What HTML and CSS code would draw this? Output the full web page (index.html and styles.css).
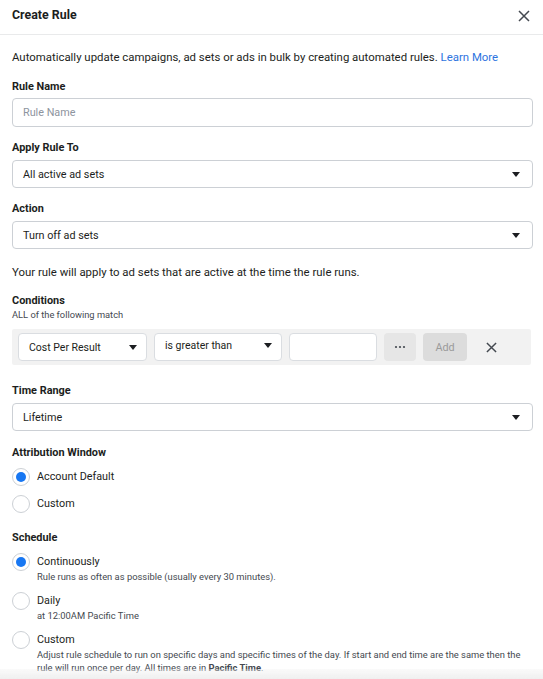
FILE: index.html
```html
<!DOCTYPE html>
<html>
<head>
<meta charset="utf-8">
<link rel="stylesheet" href="styles.css">
</head>
<body>
<div class="header">
  <div class="title">Create Rule</div>
  <svg class="close" width="12" height="12" viewBox="0 0 12 12"><path d="M1 1L11 11M11 1L1 11" stroke="#444950" stroke-width="1.5" fill="none"/></svg>
</div>
<div class="content">
  <p class="desc">Automatically update campaigns, ad sets or ads in bulk by creating automated rules. <a class="link">Learn More</a></p>

  <div class="label first">Rule Name</div>
  <div class="field input"><span class="placeholder">Rule Name</span></div>

  <div class="label">Apply Rule To</div>
  <div class="field select"><span>All active ad sets</span><span class="caret"></span></div>

  <div class="label">Action</div>
  <div class="field select"><span>Turn off ad sets</span><span class="caret"></span></div>

  <p class="note">Your rule will apply to ad sets that are active at the time the rule runs.</p>

  <div class="label">Conditions</div>
  <div class="sublabel">ALL of the following match</div>
  <div class="cond">
    <div class="cfield csel1"><span>Cost Per Result</span><span class="caret"></span></div>
    <div class="cfield csel2"><span>is greater than</span><span class="caret"></span></div>
    <div class="cfield cinput"></div>
    <div class="btn more"><svg width="12" height="4" viewBox="0 0 12 4"><circle cx="2" cy="2" r="1.1" fill="#444950"/><circle cx="6" cy="2" r="1.1" fill="#444950"/><circle cx="10" cy="2" r="1.1" fill="#444950"/></svg></div>
    <div class="btn add">Add</div>
    <svg class="cx" width="11" height="11" viewBox="0 0 12 12"><path d="M1 1L11 11M11 1L1 11" stroke="#444950" stroke-width="1.6" fill="none"/></svg>
  </div>

  <div class="label tr">Time Range</div>
  <div class="field select"><span>Lifetime</span><span class="caret"></span></div>

  <div class="label attr">Attribution Window</div>
  <div class="radios">
    <div class="radio-row"><span class="radio on"></span><div class="rtext"><div class="rtitle">Account Default</div></div></div>
    <div class="radio-row"><span class="radio"></span><div class="rtext"><div class="rtitle">Custom</div></div></div>
  </div>

  <div class="label sched">Schedule</div>
  <div class="radios">
    <div class="radio-row"><span class="radio on"></span><div class="rtext"><div class="rtitle">Continuously</div><div class="rsub">Rule runs as often as possible (usually every 30 minutes).</div></div></div>
    <div class="radio-row"><span class="radio"></span><div class="rtext"><div class="rtitle">Daily</div><div class="rsub">at 12:00AM Pacific Time</div></div></div>
    <div class="radio-row"><span class="radio"></span><div class="rtext"><div class="rtitle">Custom</div><div class="rsub">Adjust rule schedule to run on specific days and specific times of the day. If start and end time are the same then the rule will run once per day. All times are in <b>Pacific Time</b>.</div></div></div>
  </div>
</div>
<div class="fade"></div>
</body>
</html>
```

FILE: styles.css
```css
* { box-sizing: border-box; }
html, body { margin: 0; padding: 0; background: #fff; }
body {
  font-family: Roboto, "Liberation Sans", Arial, sans-serif;
  font-size: 11.4px;
  color: #1c1e21;
  width: 543px;
  height: 679px;
  overflow: hidden;
}
.header {
  height: 35px;
  border-bottom: 1px solid #e9eaeb;
  display: flex;
  align-items: center;
  justify-content: space-between;
  padding: 0 13px 5px 12px;
}
.title { font-weight: 700; font-size: 12.4px; color: #1c1e21; }
.close { margin-top: 2px; }
.content { padding: 0 10px 0 12px; }
.desc { margin: 14px 0 0; line-height: 16px; font-size: 11.4px; color: #1c1e21; }
.link { color: #2d74e0; }
.label {
  font-weight: 700;
  font-size: 10.9px;
  line-height: 16px;
  margin-top: 13px;
  color: #1c1e21;
}
.label.first { margin-top: 14px; }
.field {
  margin-top: 4px;
  height: 28px;
  border: 1px solid #ccd0d5;
  border-radius: 4px;
  display: flex;
  align-items: center;
  padding: 0 10px;
  font-size: 10.8px;
}
.field.input { height: 29px; margin-top: 3px; }
.placeholder { color: #8d949e; }
.select { justify-content: space-between; padding-right: 12px; }
.caret {
  width: 0; height: 0;
  border-left: 4px solid transparent;
  border-right: 4px solid transparent;
  border-top: 5px solid #1c1e21;
}
.note { margin: 15px 0 0; line-height: 16px; }
.sublabel { font-size: 9.3px; line-height: 12px; color: #444950; }
.cond {
  margin-top: 8px;
  background: #f2f2f2;
  border-radius: 2px;
  height: 36px;
  width: 519px;
  display: flex;
  align-items: center;
  padding: 0 6px;
  gap: 7px;
}
.cfield {
  height: 28px;
  background: #fff;
  border: 1px solid #dadde1;
  border-radius: 4px;
  display: flex;
  align-items: center;
  justify-content: space-between;
  padding: 0 9px 0 10px;
  font-size: 10.5px;
}
.csel1 { width: 129px; }
.csel2 { width: 128px; padding-bottom: 3px; }
.cinput { width: 88px; }
.btn {
  height: 28px;
  border-radius: 4px;
  display: flex;
  align-items: center;
  justify-content: center;
}
.more { width: 32px; background: #e6e6e6; }
.add { width: 44px; background: #dcdcdc; color: #9a9a9a; font-size: 10.8px; }
.cx { margin-left: 12px; }
.label.tr { margin-top: 18px; }
.label.attr { margin-top: 14px; }
.radios { margin-top: 7px; display: flex; flex-direction: column; gap: 9px; }
.radio-row { display: flex; align-items: flex-start; gap: 7px; }
.radio {
  width: 18px; height: 18px;
  border: 1px solid #ccd0d5;
  border-radius: 50%;
  flex: none;
  display: flex;
  align-items: center;
  justify-content: center;
}
.radio.on::after {
  content: "";
  width: 10px; height: 10px;
  border-radius: 50%;
  background: #1877f2;
}
.rtext { padding-top: 1px; }
.rtitle { font-size: 10.8px; line-height: 16px; }
.rsub { font-size: 9.4px; line-height: 13px; color: #444950; }
.label.sched { margin-top: 17px; }
.fade {
  position: fixed;
  left: 0; right: 0; bottom: 0;
  height: 10px;
  background: linear-gradient(to bottom, rgba(240,240,240,0.3), #efefef);
}
```
